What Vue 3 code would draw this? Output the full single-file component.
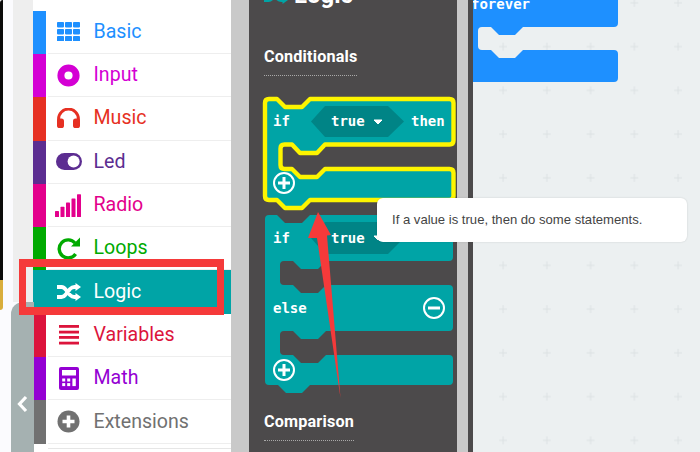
<script setup>
const categories = [
  { name: 'Basic', icon: 'basic', color: '#1e90ff' },
  { name: 'Input', icon: 'input', color: '#d400d4' },
  { name: 'Music', icon: 'music', color: '#e63022' },
  { name: 'Led', icon: 'led', color: '#5c2d91' },
  { name: 'Radio', icon: 'radio', color: '#e3008c' },
  { name: 'Loops', icon: 'loops', color: '#00aa00' },
  { name: 'Logic', icon: 'logic', color: '#00a4a6', active: true },
  { name: 'Variables', icon: 'variables', color: '#dc143c' },
  { name: 'Math', icon: 'math', color: '#9400d3' },
  { name: 'Extensions', icon: 'extensions', color: '#717171' },
]
const grid = [0, 1, 2].flatMap((r) => [0, 1, 2].map((c) => ({ x: c * 8, y: r * 7 })))
const bars = [0, 1, 2, 3, 4].map((i) => ({ x: i * 5.5, y: 17 - i * 4.2, h: 6 + i * 4.2 }))
const mathKeys = [0, 1].flatMap((c) => [0, 1].map((r) => ({ x: 3.2 + c * 5, y: 11.5 + r * 4.6 })))
</script>

<template>
  <div class="page">
    <div class="gutter">
      <div class="bezel">
        <div class="bezel-black"></div>
        <div class="bezel-gold"></div>
      </div>
      <div class="gutter-gray"></div>
    </div>

    <nav class="sidebar">
      <div
        v-for="cat in categories"
        :key="cat.name"
        class="row"
        :class="{ active: cat.active }"
        :style="{ color: cat.active ? '#fff' : cat.color, background: cat.active ? cat.color : '#fff' }"
      >
        <span class="strip" :style="{ background: cat.color }"></span>
        <div class="row-body">
          <span class="icon">
            <svg v-if="cat.icon === 'basic'" width="23" height="19" viewBox="0 0 23 19" fill="currentColor">
              <rect v-for="(g, i) in grid" :key="i" :x="g.x" :y="g.y" width="7" height="5.4" rx="0.8" />
            </svg>
            <svg v-else-if="cat.icon === 'input'" width="23" height="23" viewBox="0 0 23 23">
              <circle cx="11.5" cy="11.5" r="7.6" fill="none" stroke="currentColor" stroke-width="7" />
            </svg>
            <svg v-else-if="cat.icon === 'music'" width="23" height="20" viewBox="0 0 23 20" fill="currentColor">
              <path d="M1.6 13 V11 A9.9 9.9 0 0 1 21.4 11 V13" fill="none" stroke="currentColor" stroke-width="3" />
              <rect x="0" y="10.5" width="7" height="9.5" rx="2.6" />
              <rect x="16" y="10.5" width="7" height="9.5" rx="2.6" />
            </svg>
            <svg v-else-if="cat.icon === 'led'" width="26" height="17" viewBox="0 0 26 17">
              <rect width="26" height="17" rx="8.5" fill="currentColor" />
              <circle cx="17.6" cy="8.5" r="6" fill="#fff" />
            </svg>
            <svg v-else-if="cat.icon === 'radio'" width="27" height="23" viewBox="0 0 27 23" fill="currentColor">
              <rect v-for="(b, i) in bars" :key="i" :x="b.x" :y="b.y" width="4" :height="b.h" rx="0.6" />
            </svg>
            <svg v-else-if="cat.icon === 'loops'" width="24" height="23" viewBox="0 0 24 23">
              <path d="M18.6 17 A9 9 0 1 1 18 6" fill="none" stroke="currentColor" stroke-width="3.4" />
              <path d="M23 0.5 V9.5 H14 Z" fill="currentColor" />
            </svg>
            <svg v-else-if="cat.icon === 'logic'" width="24" height="18" viewBox="0 0 24 18">
              <path d="M0 4 H4.5 Q7 4 9 7 L13 12 Q15 14 17.5 14 H20 M0 14 H4.5 Q7 14 9 11 L13 6 Q15 4 17.5 4 H20" fill="none" stroke="currentColor" stroke-width="3.8" />
              <path d="M18.5 0 L24 4 L18.5 8 Z M18.5 10 L24 14 L18.5 18 Z" fill="currentColor" />
            </svg>
            <svg v-else-if="cat.icon === 'variables'" width="20" height="20" viewBox="0 0 20 20" fill="currentColor">
              <rect y="0" width="20" height="2.8" />
              <rect y="5.7" width="20" height="2.8" />
              <rect y="11" width="20" height="2.8" />
              <rect y="16.7" width="20" height="2.8" />
            </svg>
            <svg v-else-if="cat.icon === 'math'" width="20" height="23" viewBox="0 0 20 23">
              <rect width="20" height="23" rx="2" fill="currentColor" />
              <rect x="3" y="3" width="14" height="5.5" fill="#fff" />
              <rect v-for="(k, i) in mathKeys" :key="i" :x="k.x" :y="k.y" width="3" height="3" fill="#fff" />
              <rect x="13.4" y="11.5" width="3.4" height="7.6" fill="#fff" />
            </svg>
            <svg v-else width="23" height="23" viewBox="0 0 23 23">
              <circle cx="11.5" cy="11.5" r="11" fill="currentColor" />
              <path d="M11.5 5.5 V17.5 M5.5 11.5 H17.5" stroke="#fff" stroke-width="3.6" />
            </svg>
          </span>
          <span class="label">{{ cat.name }}</span>
        </div>
      </div>
      <div class="sidebar-end"></div>
    </nav>

    <div class="rail"></div>

    <section class="flyout">
      <div class="flyout-title">
        <svg class="title-icon" width="24" height="18" viewBox="0 0 24 18">
          <path d="M0 4 H4.5 Q7 4 9 7 L13 12 Q15 14 17.5 14 H20 M0 14 H4.5 Q7 14 9 11 L13 6 Q15 4 17.5 4 H20" fill="none" stroke="#00a4a6" stroke-width="3.8" />
          <path d="M18.5 0 L24 4 L18.5 8 Z M18.5 10 L24 14 L18.5 18 Z" fill="#00a4a6" />
        </svg>
        <span>Logic</span>
      </div>
      <div class="group-label first">Conditionals</div>
      <svg class="blocks" width="208" height="310" viewBox="249 90 208 310">
        <path class="block selected" d="M265 103 Q265 99 269 99 H277 L285 107 H302 L310 99 H449.5 Q453.5 99 453.5 103 V140.5 Q453.5 144.5 449.5 144.5 H325 L317 153 H300 L292 144.5 H284.5 Q280.5 144.5 280.5 148.5 V165 Q280.5 169 284.5 169 H292 L300 177 H317 L325 169 H449.5 Q453.5 169 453.5 173 V196 Q453.5 200 449.5 200 H310 L302 208 H285 L277 200 H269 Q265 200 265 196 Z" />
        <path class="hex" d="M311 121.5 L325 106 H388 L404 121.5 L388 137 H325 Z" />
        <text class="mono" x="273" y="126">if</text>
        <text class="mono" x="331" y="126">true</text>
        <path class="caret" d="M374 120 H382 L378 124 Z" />
        <text class="mono" x="411" y="126">then</text>
        <circle class="round" cx="284" cy="183" r="10" />
        <path class="sign" d="M284 177 V189 M278 183 H290" />

        <path class="block" d="M265 219 Q265 215 269 215 H277 L285 223 H302 L310 215 H449 Q453 215 453 219 V257 Q453 261 449 261 H326 L318 269 H301 L293 261 H284 Q280 261 280 265 V281 Q280 285 284 285 H293 L301 293 H318 L326 285 H449 Q453 285 453 289 V327 Q453 331 449 331 H326 L318 339 H301 L293 331 H284 Q280 331 280 335 V351 Q280 355 284 355 H293 L301 363 H318 L326 355 H449 Q453 355 453 359 V381 Q453 385 449 385 H310 L302 393 H286 L278 385 H269 Q265 385 265 381 Z" />
        <path class="hex" d="M311 238 L325 222 H388 L404 238 L388 254 H325 Z" />
        <text class="mono" x="273" y="243">if</text>
        <text class="mono" x="331" y="243">true</text>
        <path class="caret" d="M374 236 H382 L378 240 Z" />
        <text class="mono" x="273" y="313">else</text>
        <circle class="round" cx="434" cy="308" r="10" />
        <path class="sign" d="M428 308 H440" />
        <circle class="round" cx="284" cy="370" r="10" />
        <path class="sign" d="M284 364 V376 M278 370 H290" />
      </svg>
      <div class="group-label">Comparison</div>
    </section>

    <div class="rail narrow"></div>
    <div class="divider"></div>

    <main class="workspace">
      <svg width="227" height="452" viewBox="473 0 227 452">
        <defs>
          <pattern id="dots" x="481.2" y="-19" width="43.75" height="43.75" patternUnits="userSpaceOnUse">
            <path d="M21.9 18 V25.8 M18 21.9 H25.8" stroke="#dce1e3" stroke-width="1" />
          </pattern>
        </defs>
        <rect x="473" width="227" height="452" fill="url(#dots)" />
        <path class="forever" d="M473 -20 H614 Q618 -20 618 -16 V23 Q618 27 614 27 H523 L515 35 H499 L491 27 H482 Q478 27 478 31 V46 Q478 50 482 50 H491 L499 58 H515 L523 50 H614 Q618 50 618 54 V78 Q618 82 614 82 H473 Z" />
        <text class="mono" x="471" y="8.5">forever</text>
      </svg>
    </main>

    <button class="tab" type="button" aria-label="Collapse">
      <svg width="11" height="18" viewBox="0 0 11 18">
        <path d="M9 2 L2.5 9 L9 16" fill="none" stroke="#fff" stroke-width="3.2" />
      </svg>
    </button>

    <div class="highlight"></div>

    <svg class="arrow" width="40" height="190" viewBox="305 210 40 190">
      <path d="M318 212 L331 235 L327 235.5 L340.5 398 L317 238 L308 238 Z" fill="#f53a3a" />
    </svg>

    <div class="tooltip">If a value is true, then do some statements.</div>
  </div>
</template>

<style>
html, body { margin: 0; background: #fff; overflow: hidden; }
</style>

<style scoped>
.page {
  position: relative;
  display: flex;
  width: 700px;
  height: 452px;
  overflow: hidden;
  background: #fff;
  font-family: Roboto, "Liberation Sans", sans-serif;
}
.gutter { display: flex; width: 33px; flex: none; background: #fbfbfe; }
.bezel { width: 3px; margin-right: 10px; display: flex; flex-direction: column; }
.bezel-black { height: 280px; background: #0a0a0a; border-top-left-radius: 3px; }
.bezel-gold { height: 30px; background: #d9ae3c; border-bottom-right-radius: 3px; }
.gutter-gray { width: 20px; height: 302px; background: #eeeeee; }

.sidebar { width: 198px; flex: none; padding-top: 10.7px; background: #fff; }
.row { display: flex; height: 43.3px; }
.strip { width: 13px; flex: none; }
.row-body {
  flex: 1;
  display: flex;
  align-items: center;
  margin-left: 1.5px;
  border-bottom: 1.5px solid #eeeeee;
  box-sizing: border-box;
}
.row.active .row-body { border-bottom: none; }
.icon { width: 27px; margin: 0 11.5px 0 7.5px; display: flex; align-items: center; justify-content: center; flex: none; }
.icon svg { display: block; }
.label { font-size: 19.6px; line-height: 24px; }
.sidebar-end { margin: 4px 0 0 14.5px; border-top: 1px solid #e6e6e6; }

.rail { width: 18px; flex: none; background: #c9c9c9; }
.rail.narrow { width: 11px; }
.divider { width: 5px; flex: none; background: #4c4a4b; }

.flyout { width: 208px; flex: none; background: #4c4a4b; color: #fff; }
.flyout-title {
  display: flex;
  align-items: center;
  gap: 6px;
  height: 30px;
  margin-top: -20px;
  padding-left: 15px;
  font-size: 24px;
  font-weight: 700;
}
.group-label {
  margin: 12px 0 0 15px;
  padding-bottom: 8px;
  width: fit-content;
  line-height: 20px;
  font-size: 16.2px;
  font-weight: 700;
  letter-spacing: 0.17px;
  border-bottom: 1px dotted #a9a9a9;
}
.group-label.first { margin-top: 37px; }
.blocks { display: block; margin-top: 14px; }

.block { fill: #00a4a6; }
.block.selected { stroke: #fdf500; stroke-width: 4.4; stroke-linejoin: round; }
.hex { fill: #008486; }
.caret { fill: #fff; stroke: #fff; stroke-width: 1; stroke-linejoin: round; }
.mono {
  fill: #fff;
  font-family: "DejaVu Sans Mono", "Liberation Mono", monospace;
  font-size: 14px;
  font-weight: 700;
}
.round { fill: none; stroke: #fff; stroke-width: 2; }
.sign { fill: none; stroke: #fff; stroke-width: 3; }

.workspace { flex: 1; background: #ecf0f1; overflow: hidden; }
.workspace svg { display: block; }
.forever { fill: #1e90ff; }

.tab {
  position: absolute;
  left: 11px;
  top: 302px;
  width: 23px;
  height: 150px;
  padding: 93px 0 0 0;
  border: none;
  border-top-left-radius: 12px;
  background: #a5b1b1;
  display: flex;
  justify-content: center;
  box-sizing: border-box;
}
.tab svg { display: block; }

.highlight {
  position: absolute;
  left: 19px;
  top: 259px;
  width: 205px;
  height: 56px;
  box-sizing: border-box;
  border: solid #f53a3a;
  border-width: 8px 7px;
}
.arrow { position: absolute; left: 305px; top: 210px; }

.tooltip {
  position: absolute;
  left: 377px;
  top: 198px;
  width: 310px;
  height: 44px;
  box-sizing: border-box;
  padding-left: 15px;
  line-height: 44px;
  font-family: "Liberation Sans", Arial, sans-serif;
  font-size: 13.1px;
  color: #444;
  background: #fff;
  border-radius: 6px;
  box-shadow: 0 0 2px rgba(0, 0, 0, 0.15);
}
</style>
